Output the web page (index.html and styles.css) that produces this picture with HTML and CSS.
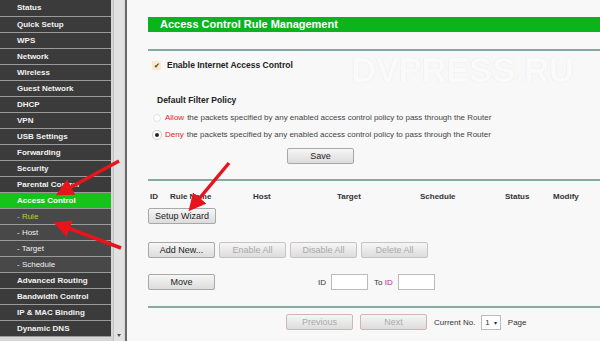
FILE: index.html
```html
<!DOCTYPE html>
<html>
  <head>
    <title>Access Control Rule Management</title>
    <link rel="stylesheet" href="styles.css">
  </head>
  <body>
    <div class="side">
      <ul class="menu">
        <li>Status</li>
        <li>Quick Setup</li>
        <li>WPS</li>
        <li>Network</li>
        <li>Wireless</li>
        <li>Guest Network</li>
        <li>DHCP</li>
        <li>VPN</li>
        <li>USB Settings</li>
        <li>Forwarding</li>
        <li>Security</li>
        <li>Parental Control</li>
        <li class="active">Access Control</li>
        <li class="sub current">- Rule</li>
        <li class="sub">- Host</li>
        <li class="sub">- Target</li>
        <li class="sub">- Schedule</li>
        <li>Advanced Routing</li>
        <li>Bandwidth Control</li>
        <li>IP &amp; MAC Binding</li>
        <li>Dynamic DNS</li>
      </ul>
      <div class="scroll"><span class="arrowDown"></span></div>
    </div>

    <div class="main">
      <div class="title">Access Control Rule Management</div>
      <div class="line first"></div>

      <div class="check">
        <span class="box">&#10004;</span>
        <b>Enable Internet Access Control</b>
      </div>

      <div class="policy">Default Filter Policy</div>
      <div class="radio"><span class="dot"></span><span class="red">Allow</span> the packets specified by any enabled access control policy to pass through the Router</div>
      <div class="radio"><span class="dot on"></span><span class="red">Deny</span> the packets specified by any enabled access control policy to pass through the Router</div>

      <div class="saveRow"><button class="btn">Save</button></div>
      <div class="line"></div>

      <div class="thead">
        <span class="c-id">ID</span>
        <span class="c-name">Rule Name</span>
        <span class="c-host">Host</span>
        <span class="c-target">Target</span>
        <span class="c-sched">Schedule</span>
        <span class="c-status">Status</span>
        <span class="c-mod">Modify</span>
      </div>
      <div class="wizRow"><button class="btn">Setup Wizard</button></div>

      <div class="btnRow">
        <button class="btn">Add New...</button>
        <button class="btn off">Enable All</button>
        <button class="btn off">Disable All</button>
        <button class="btn off">Delete All</button>
      </div>

      <div class="moveRow">
        <button class="btn">Move</button>
        <span class="idLbl">ID</span><span class="field"></span>
        <span class="toLbl">To <span class="pink">ID</span></span><span class="field"></span>
      </div>

      <div class="line last"></div>
      <div class="pager">
        <button class="btn off pinkEdge">Previous</button>
        <button class="btn off pinkEdge">Next</button>
        <span>Current No.</span>
        <span class="select">1 <i>&#9662;</i></span>
        <span>Page</span>
      </div>

      <div class="mark">DVPRESS.RU</div>
    </div>

    <svg class="arrows" width="600" height="341" viewBox="0 0 600 341">
      <defs>
        <marker id="head" markerWidth="5" markerHeight="5" refX="3" refY="2.5" orient="auto" markerUnits="strokeWidth">
          <path d="M0,0 L5,2.5 L0,5 Z" fill="#e8141c"/>
        </marker>
      </defs>
      <line x1="119" y1="161" x2="62" y2="192" stroke="#e8141c" stroke-width="3.5" marker-end="url(#head)"/>
      <line x1="229" y1="163" x2="193" y2="206" stroke="#e8141c" stroke-width="3.5" marker-end="url(#head)"/>
      <line x1="121" y1="248" x2="60" y2="225" stroke="#e8141c" stroke-width="3.5" marker-end="url(#head)"/>
    </svg>
  </body>
</html>
```

FILE: styles.css
```css
body{
    margin:0;
    display:flex;
    height:341px;
    overflow:hidden;
    background:#f8f8f8;
    font-family:"Liberation Sans", Arial, sans-serif;
    font-size:8px;
    color:#333;
}

.side{
    display:flex;
    width:125px;
    background:#d6d6d6;
    border-right:2px solid #6a6a6a;
}
.menu{
    list-style:none;
    margin:0;
    padding:0;
    width:111px;
}
.menu li{
    height:15px;
    line-height:16px;
    border-bottom:1.1px solid #9a9a9a;
    background:#3b3b3b;
    color:#f2f2f2;
    font-weight:bold;
    padding-left:17px;
    font-size:8px;
}
.menu li:first-child{
    height:15.5px;
}
.menu li.active{
    background:#14c41a;
    color:#fff;
}
.menu li.sub{
    background:#484848;
    font-weight:normal;
    padding-left:17px;
}
.menu li.current{
    color:#b6d629;
}

.scroll{
    margin-left:2px;
    width:10px;
    background:#e2e2e2;
    border-left:1px solid #c2c2c2;
    display:flex;
    flex-direction:column;
    justify-content:flex-end;
    align-items:center;
}
.arrowDown{
    width:0;
    height:0;
    border-left:2px solid transparent;
    border-right:2px solid transparent;
    border-top:3px solid #555;
    margin-bottom:4px;
}

.main{
    flex:1;
    padding-left:21px;
    position:relative;
}
.title{
    margin-top:17px;
    height:15px;
    line-height:15px;
    background:#0bb41c;
    color:#fff;
    font-size:11px;
    font-weight:bold;
    padding-left:12px;
}
.line{
    height:2px;
    background:#86aba6;
}
.line.first{
    margin-top:17px;
}

.check{
    display:flex;
    align-items:center;
    height:14px;
    margin-top:7px;
    padding-left:4px;
    font-size:8.5px;
    color:#222;
}
.box{
    width:9px;
    height:9px;
    background:#fbe9c8;
    color:#333;
    font-size:7px;
    line-height:9px;
    text-align:center;
    margin-right:6px;
}

.policy{
    margin-top:23px;
    padding-left:9px;
    font-weight:bold;
    font-size:8.5px;
    color:#222;
    height:14px;
}
.radio{
    display:flex;
    align-items:center;
    height:17px;
    padding-left:5px;
    color:#444;
}
.dot{
    width:8px;
    height:8px;
    border-radius:50%;
    border:1px solid #e2e2e2;
    background:#fff;
    margin-right:4px;
    box-sizing:border-box;
}
.dot.on{
    border:2.5px solid #fff;
    background:#222;
    box-shadow:0 0 0 1px #ccc;
}
.red{
    color:#e0261c;
    margin-right:3px;
}

.btn{
    font-family:"Liberation Sans", Arial, sans-serif;
    font-size:9px;
    color:#222;
    width:67px;
    height:16px;
    padding:0;
    border:1px solid #a8a8a8;
    border-radius:2px;
    background:linear-gradient(#f6f6f6, #dcdcdc);
}
.btn.off{
    color:#a9a9a9;
    border-color:#c4c4c4;
}
.btn.pinkEdge{
    border-color:#d3b4b4;
}

.saveRow{
    margin-top:5px;
    height:31px;
    padding-left:139px;
}
.thead{
    display:flex;
    height:20px;
    align-items:flex-end;
    font-weight:bold;
    color:#333;
    padding-left:2px;
}
.thead span{
    display:block;
}
.c-id{ width:20px; }
.c-name{ width:83px; }
.c-host{ width:84px; }
.c-target{ width:83px; }
.c-sched{ width:85px; }
.c-status{ width:48px; }

.wizRow{
    margin-top:7px;
    height:34px;
}
.wizRow .btn{
    width:68px;
}

.btnRow{
    display:flex;
    gap:4px;
    height:32px;
}
.btnRow .btn{
    width:67px;
}

.moveRow{
    display:flex;
    align-items:center;
    height:16px;
    color:#333;
}
.idLbl{
    margin-left:103px;
    margin-right:5px;
}
.toLbl{
    margin-left:6px;
    margin-right:5px;
}
.pink{
    color:#c0259c;
}
.field{
    width:35px;
    height:14px;
    background:#fff;
    border:1px solid #bbb;
}

.line.last{
    margin-top:16px;
}
.pager{
    display:flex;
    align-items:center;
    gap:7px;
    margin-top:6px;
    padding-left:138px;
    color:#333;
}
.pager .btn{
    width:67px;
}
.select{
    display:inline-flex;
    align-items:center;
    gap:4px;
    height:13px;
    padding:0 3px;
    background:#fff;
    border:1px solid #bbb;
    font-size:8px;
    margin-left:-1px;
}
.select i{
    font-style:normal;
    font-size:6px;
}

.mark{
    position:absolute;
    left:224px;
    top:50px;
    font-size:35px;
    font-weight:bold;
    letter-spacing:-0.5px;
    color:#fafafa;
    text-shadow:0 0 1px #e0e0e0;
    white-space:nowrap;
}

.arrows{
    position:absolute;
    left:0;
    top:0;
    pointer-events:none;
}
```
